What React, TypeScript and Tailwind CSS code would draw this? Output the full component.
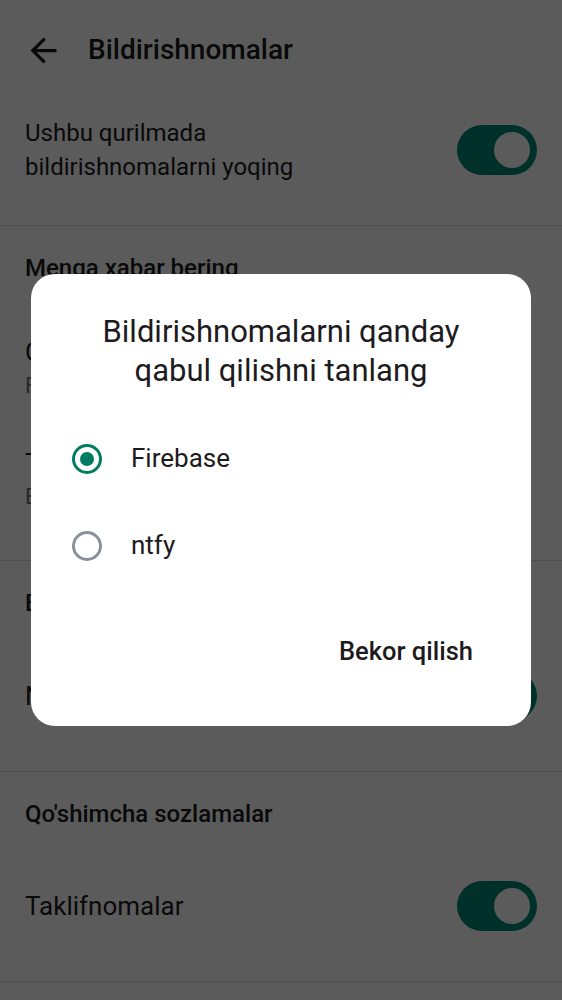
import React, { useState } from "react";

type Option = { id: string; label: string };

const options: Option[] = [
    { id: "firebase", label: "Firebase" },
    { id: "ntfy", label: "ntfy" },
];

// Material style switch (on state)
const Toggle: React.FC = () => (
    <div className="w-[80px] h-[50px] rounded-full bg-[#008676] flex items-center justify-end pr-[7px] shrink-0">
        <div className="w-[36px] h-[36px] rounded-full bg-white" />
    </div>
);

const SectionTitle: React.FC<{ children: React.ReactNode }> = ({ children }) => (
    <p className="text-[24px] leading-[34px] font-medium text-[#1b1b1b]">{children}</p>
);

const App: React.FC = () => {
    const [selected, setSelected] = useState("firebase");

    return (
        <div
            className="relative w-[562px] h-[1000px] overflow-hidden bg-white text-[#1b1b1b]"
            style={{ fontFamily: "Roboto, 'Noto Sans', sans-serif" }}
        >
            {/* Top bar */}
            <div className="h-[100px] flex items-center pl-[24px]">
                <svg width="39" height="39" viewBox="0 0 24 24" fill="#1b1b1b">
                    <path d="M20 11H7.83l5.59-5.59L12 4l-8 8 8 8 1.41-1.41L7.83 13H20v-2z" />
                </svg>
                <h1 className="ml-[25px] text-[28px] font-medium leading-none">Bildirishnomalar</h1>
            </div>

            {/* Main switch */}
            <div className="h-[126px] border-b border-[#dddddd] flex items-center justify-between px-[25px] pb-[26px]">
                <p className="text-[24px] leading-[34px]">
                    Ushbu qurilmada
                    <br />
                    bildirishnomalarni yoqing
                </p>
                <Toggle />
            </div>

            {/* Menga xabar bering */}
            <div className="h-[335px] border-b border-[#dddddd] px-[25px] pt-[25px]">
                <SectionTitle>Menga xabar bering</SectionTitle>
                <div className="mt-[51px]">
                    <p className="text-[26px] leading-[33px]">Chatdagi xabarlar</p>
                    <p className="text-[22px] leading-[33px] text-[#6f6f6f]">Faqat shaxsiy xabarlar</p>
                </div>
                <div className="mt-[45px]">
                    <p className="text-[26px] leading-[33px]">Tadbirlar</p>
                    <p className="text-[22px] leading-[33px] text-[#6f6f6f]">Eslatmalar yoqilgan</p>
                </div>
            </div>

            {/* E... */}
            <div className="h-[211px] border-b border-[#dddddd] px-[25px] pt-[25px]">
                <SectionTitle>Elektron pochta</SectionTitle>
                <div className="mt-[51px] flex items-center justify-between">
                    <p className="text-[26px] leading-[34px]">Nashrlar haqida xabar</p>
                    <Toggle />
                </div>
            </div>

            {/* Qo'shimcha sozlamalar */}
            <div className="h-[210px] border-b border-[#dddddd] px-[25px] pt-[25px]">
                <SectionTitle>Qo'shimcha sozlamalar</SectionTitle>
                <div className="mt-[50px] flex items-center justify-between">
                    <p className="text-[26px] leading-[34px]">Taklifnomalar</p>
                    <Toggle />
                </div>
            </div>

            {/* Dialog overlay */}
            <div className="absolute inset-0 bg-black/[0.643] flex items-center justify-center">
                <div className="w-[500px] bg-white rounded-[24px] pt-[38px] pb-[51px]">
                    <h2 className="text-center text-[31px] leading-[39px] text-[#1d1b20] px-[20px]">
                        Bildirishnomalarni qanday
                        <br />
                        qabul qilishni tanlang
                    </h2>

                    <div className="mt-[25px]">
                        {options.map((opt) => {
                            const active = selected === opt.id;
                            return (
                                <button
                                    key={opt.id}
                                    onClick={() => setSelected(opt.id)}
                                    className="w-full h-[87px] flex items-center pl-[41px] text-left"
                                >
                                    <span
                                        className={`w-[30px] h-[30px] rounded-full border-[3px] flex items-center justify-center ${
                                            active ? "border-[#017c62]" : "border-[#8b9199]"
                                        }`}
                                    >
                                        {active && <span className="w-[14px] h-[14px] rounded-full bg-[#017c62]" />}
                                    </span>
                                    <span className="ml-[29px] text-[26px] text-[#1d1b20]">{opt.label}</span>
                                </button>
                            );
                        })}
                    </div>

                    <div className="mt-[38px] flex justify-end pr-[58px]">
                        <button className="h-[48px] text-[25.5px] font-medium text-[#1d1b20]">Bekor qilish</button>
                    </div>
                </div>
            </div>
        </div>
    );
};

export default App;
